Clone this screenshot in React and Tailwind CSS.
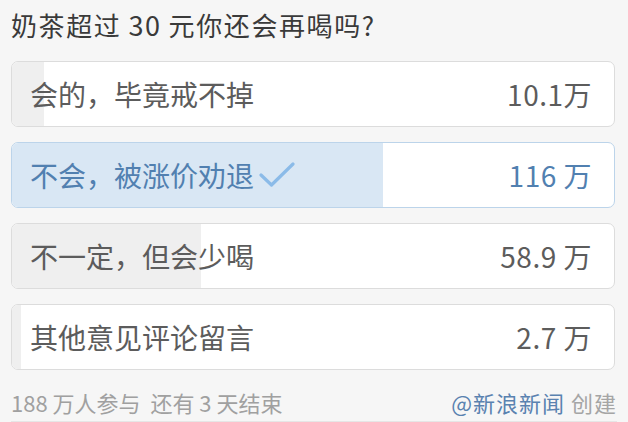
import React from 'react';

const options = [
    { label: '会的，毕竟戒不掉', count: 10.1, text: '10.1万' },
    { label: '不会，被涨价劝退', count: 116, text: '116 万', voted: true },
    { label: '不一定，但会少喝', count: 58.9, text: '58.9 万' },
    { label: '其他意见评论留言', count: 2.7, text: '2.7 万' },
];

const total = 188;

const Check = () => (
    <svg width="36" height="28" viewBox="0 0 36 28" className="ml-[5px] shrink-0">
        <path d="M2 14 L12.5 24 L34 3" fill="none" stroke="#8bbbe8" strokeWidth="3.2" strokeLinecap="round" strokeLinejoin="round" />
    </svg>
);

const OptionRow = ({ option }) => {
    const pct = (option.count / total) * 100;
    const voted = option.voted;
    const color = voted ? 'text-[#5180b0]' : 'text-[#5c5c5c]';
    return (
        <div
            className={`relative h-[66px] rounded-[7px] border overflow-hidden bg-white ${
                voted ? 'border-[#bcd4ea]' : 'border-[#dcdcdc]'
            }`}
        >
            {/* progress fill */}
            <div
                className={`absolute left-0 top-0 bottom-0 ${voted ? 'bg-[#d9e7f4]' : 'bg-[#efefef]'}`}
                style={{ width: `${pct}%` }}
            />
            <div className="relative h-full flex items-center justify-between pl-[18px] pr-[22px]">
                <div className={`flex items-center text-[28px] leading-none ${color}`}>
                    <span>{option.label}</span>
                    {voted && <Check />}
                </div>
                <span className={`text-[28px] leading-none tracking-[0.5px] ${color}`}>{option.text}</span>
            </div>
        </div>
    );
};

const App = () => {
    return (
        <div
            className="w-[628px] h-[422px] bg-[#f6f6f6] px-[11px] overflow-hidden"
            style={{ fontFamily: '"Noto Sans CJK SC", "Noto Sans", sans-serif' }}
        >
            {/* Title */}
            <div className="h-[61px] pt-[10px]">
                <h1 className="text-[26px] leading-[30px] text-[#3a3a3a] font-normal tracking-[1.6px]">
                    奶茶超过<span className="mx-[7px] text-[27px]">30</span>元你还会再喝吗?
                </h1>
            </div>

            {/* Options */}
            <div className="flex flex-col gap-[15px] mr-[2px]">
                {options.map((o) => (
                    <OptionRow key={o.label} option={o} />
                ))}
            </div>

            {/* Footer */}
            <div className="flex justify-between items-center pt-[20px] pb-[7px] border-b border-[#e6e6e6] text-[22px] leading-[24px]">
                <span className="text-[#a0a0a0]">188 万人参与&nbsp;&nbsp;还有 3 天结束</span>
                <span className="tracking-[1px]">
                    <span className="text-[#5a82b0]">@新浪新闻</span>
                    <span className="text-[#a5a5a5]"> 创建</span>
                </span>
            </div>
        </div>
    );
};

export default App;
